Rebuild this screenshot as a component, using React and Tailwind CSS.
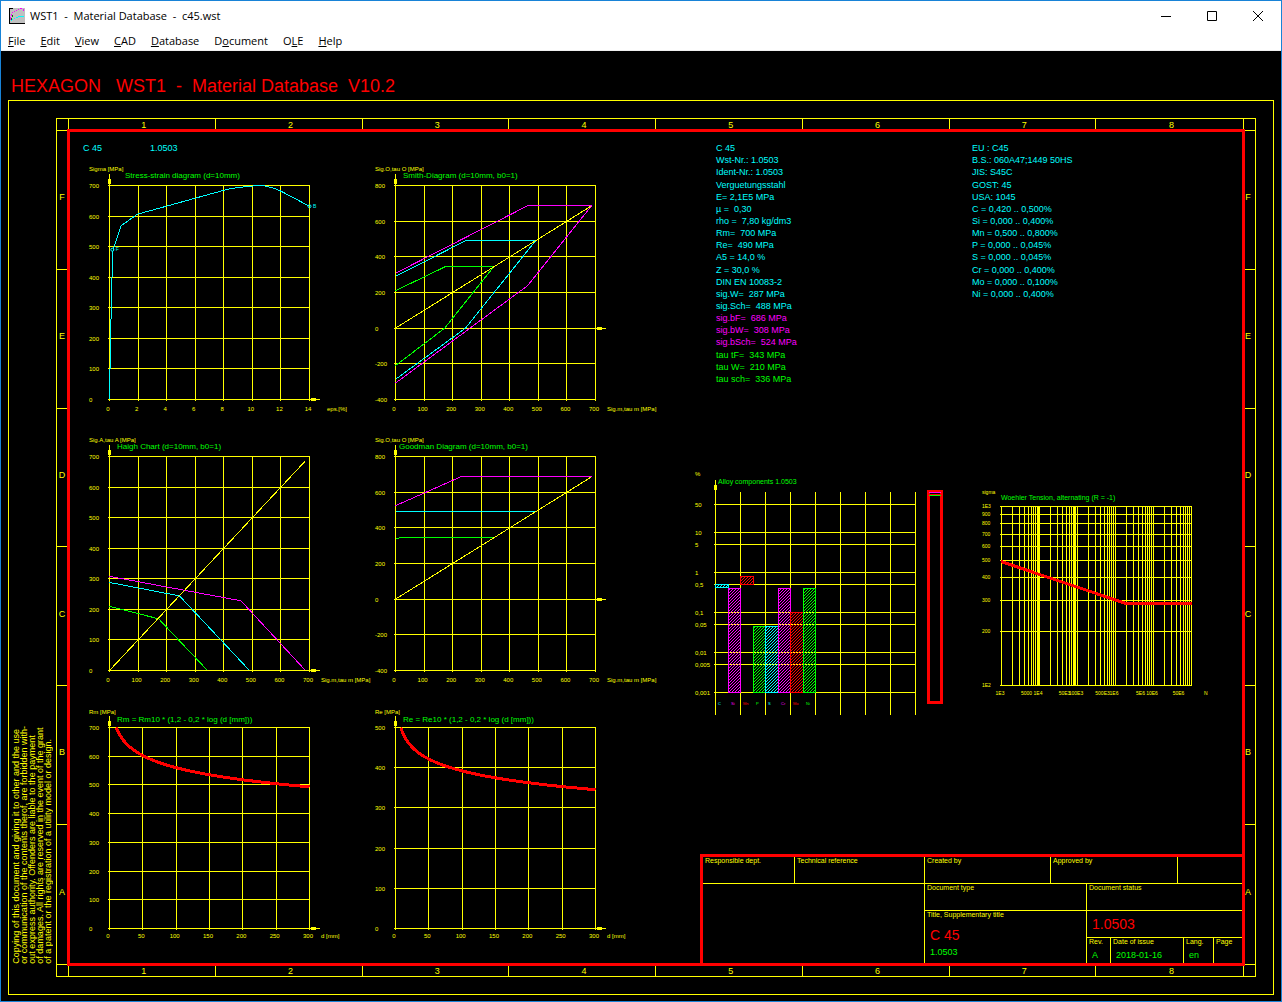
import React from 'react';
import { clsx } from 'clsx';

const YELLOW = '#ffff00';
const CYAN = '#00ffff';
const MAGENTA = '#ff00ff';
const GREEN = '#00ff00';
const RED = '#ff0000';

const MENU = [
    ['', 'F', 'ile'],
    ['', 'E', 'dit'],
    ['', 'V', 'iew'],
    ['', 'C', 'AD'],
    ['', 'D', 'atabase'],
    ['D', 'o', 'cument'],
    ['O', 'L', 'E'],
    ['', 'H', 'elp']
];

const COPYRIGHT = [
    'Copying of this document and giving it to other and the use',
    'or communication of the contents therof, are forbidden with-',
    'out express authority. Offenders are liable to the payment',
    'of damages. All rights are reserved in the event of the grant',
    'of a patent or the registration of a utility model or design.'
];

const PROPERTIES = [
    { color: 'text-[#00ffff]', lines: ['C 45', 'Wst-Nr.: 1.0503', 'Ident-Nr.: 1.0503'] },
    {
        color: 'text-[#00ffff]',
        spaced: true,
        lines: ['Verguetungsstahl', 'E= 2,1E5 MPa', 'µ =  0,30', 'rho =  7,80 kg/dm3', 'Rm=  700 MPa', 'Re=  490 MPa', 'A5 = 14,0 %']
    },
    { color: 'text-[#00ffff]', spaced: true, lines: ['Z = 30,0 %', 'DIN EN 10083-2', 'sig.W=  287 MPa', 'sig.Sch=  488 MPa'] },
    { color: 'text-[#ff00ff]', lines: ['sig.bF=  686 MPa', 'sig.bW=  308 MPa', 'sig.bSch=  524 MPa'] },
    { color: 'text-[#00ff00]', spaced: true, lines: ['tau tF=  343 MPa', 'tau W=  210 MPa', 'tau sch=  336 MPa'] }
];

const STANDARDS = [
    { color: 'text-[#00ffff]', lines: ['EU : C45', 'B.S.: 060A47;1449 50HS', 'JIS: S45C'] },
    {
        color: 'text-[#00ffff]',
        spaced: true,
        lines: ['GOST: 45', 'USA: 1045', 'C = 0,420 .. 0,500%', 'Si = 0,000 .. 0,400%', 'Mn = 0,500 .. 0,800%', 'P = 0,000 .. 0,045%', 'S = 0,000 .. 0,045%']
    },
    { color: 'text-[#00ffff]', spaced: true, lines: ['Cr = 0,000 .. 0,400%', 'Mo = 0,000 .. 0,100%', 'Ni = 0,000 .. 0,400%'] }
];

const range = (from, to, step) => {
    const out = [];
    for (let v = from; v <= to; v += step) out.push(v);
    return out;
};

// Strength over diameter: R = R10 * (1,2 - 0,2 * log d)
const sizeCurve = (r10, from) =>
    [from, ...range(10, 300, 5)].map(d => [d, r10 * (1.2 - 0.2 * Math.log10(d))]);

const TALL = { height: 214, titleY: 14, yLabelY: 7, xLabelY: 12 };
const SHORT = { height: 201, titleY: 16, yLabelY: 8, xLabelY: 10 };

const CHARTS = [
    {
        ...TALL,
        title: 'Stress-strain diagram (d=10mm)',
        titleX: 16,
        yLabel: 'Sigma [MPa]',
        xLabel: 'eps.[%]',
        xLabelX: 18,
        x: [0, 14, 2],
        y: [0, 700, 100],
        series: [
            {
                color: CYAN,
                points: [
                    [0, 0], [0.03, 85], [0.1, 250], [0.18, 410], [0.25, 490], [0.8, 568], [1.95, 606],
                    [7.9, 683], [8.5, 690], [9.3, 695], [10.2, 699], [10.8, 699], [11.6, 690], [12.1, 679], [14, 632]
                ]
            }
        ],
        marks: [[0.2, 490, 'F'], [14, 632, 'B']]
    },
    {
        ...TALL,
        title: 'Smith-Diagram (d=10mm, b0=1)',
        titleX: 8,
        yLabel: 'Sig.O,tau O [MPa]',
        xLabel: 'Sig.m,tau m [MPa]',
        xLabelX: 12,
        x: [0, 700, 100],
        y: [-400, 800, 200],
        series: [
            { color: MAGENTA, points: [[0, 308], [462, 686], [686, 686], [462, 238], [0, -308]] },
            { color: CYAN, points: [[0, 290], [245, 490], [490, 490], [245, 0], [0, -287]] },
            { color: GREEN, points: [[0, 210], [172, 343], [343, 343], [172, 0], [0, -210]] },
            { color: YELLOW, points: [[0, 0], [686, 686]] }
        ]
    },
    {
        ...TALL,
        title: 'Haigh Chart (d=10mm, b0=1)',
        titleX: 8,
        yLabel: 'Sig.A,tau A [MPa]',
        xLabel: 'Sig.m,tau m [MPa]',
        xLabelX: 12,
        x: [0, 700, 100],
        y: [0, 700, 100],
        series: [
            { color: MAGENTA, points: [[0, 308], [460, 228], [686, 0]] },
            { color: CYAN, points: [[0, 288], [245, 244], [490, 0]] },
            { color: GREEN, points: [[0, 210], [172, 169], [343, 0]] },
            { color: YELLOW, points: [[0, 0], [686, 686]] }
        ]
    },
    {
        ...TALL,
        title: 'Goodman Diagram (d=10mm, b0=1)',
        titleX: 4,
        yLabel: 'Sig.O,tau O [MPa]',
        xLabel: 'Sig.m,tau m [MPa]',
        xLabelX: 12,
        x: [0, 700, 100],
        y: [-400, 800, 200],
        series: [
            { color: MAGENTA, points: [[0, 524], [228, 686], [686, 686]] },
            { color: CYAN, points: [[0, 490], [490, 490]] },
            { color: GREEN, points: [[0, 336], [12, 343], [343, 343]] },
            { color: YELLOW, points: [[0, 0], [686, 686]] }
        ]
    },
    {
        ...SHORT,
        title: 'Rm = Rm10 * (1,2 - 0,2 * log (d [mm]))',
        titleX: 8,
        yLabel: 'Rm [MPa]',
        xLabel: 'd [mm]',
        xLabelX: 12,
        x: [0, 300, 50],
        y: [0, 700, 100],
        series: [{ color: RED, width: 3, points: sizeCurve(700, 10) }]
    },
    {
        ...SHORT,
        title: 'Re = Re10 * (1,2 - 0,2 * log (d [mm]))',
        titleX: 8,
        yLabel: 'Re [MPa]',
        xLabel: 'd [mm]',
        xLabelX: 12,
        x: [0, 300, 50],
        y: [0, 500, 100],
        series: [{ color: RED, width: 3, points: sizeCurve(490, 8) }]
    }
];

const ALLOYS = [
    ['C', 0.42, 0.5, CYAN],
    ['Si', 0.001, 0.4, MAGENTA],
    ['Mn', 0.5, 0.8, RED],
    ['P', 0.001, 0.045, GREEN],
    ['S', 0.001, 0.045, CYAN],
    ['Cr', 0.001, 0.4, MAGENTA],
    ['Mo', 0.001, 0.1, RED],
    ['Ni', 0.001, 0.4, GREEN]
];

const snap = v => Math.round(v) + 0.5;

const Line = ({ x1, y1, x2, y2, color = YELLOW }) => (
    <line x1={x1} y1={y1} x2={x2} y2={y2} stroke={color} shapeRendering="crispEdges" />
);

const Chart = ({ title, titleX, titleY, yLabel, yLabelY, xLabel, xLabelX, xLabelY, x, y, height, series, marks = [] }) => {
    const left = 20;
    const top = 21;
    const width = 200;
    const px = v => left + ((v - x[0]) / (x[1] - x[0])) * width;
    const py = v => top + height - ((v - y[0]) / (y[1] - y[0])) * height;
    const axisY = snap(py(0));
    const labelY = top + height + xLabelY;

    return (
        <svg width="286" height="250" className="block overflow-visible" role="img" aria-label={title}>
            {range(...x).map(v => (
                <g key={v}>
                    <Line x1={snap(px(v))} y1={top} x2={snap(px(v))} y2={top + height + 2} />
                    <text x={px(v) - 1} y={labelY} fontSize="6" textAnchor="middle" fill={YELLOW}>{v}</text>
                </g>
            ))}
            {range(...y).map(v => (
                <g key={v}>
                    <Line x1={left - 1} y1={snap(py(v))} x2={left + width + 1} y2={snap(py(v))} />
                    <text x="0" y={Math.round(py(v)) + 3} fontSize="6" fill={YELLOW}>{v}</text>
                </g>
            ))}
            {/* Axis arrows */}
            <Line x1={left + 0.5} y1={top - 11} x2={left + 0.5} y2={top} />
            <rect x={left - 1} y={top - 6} width="3" height="5" fill={YELLOW} />
            <Line x1={left + width} y1={axisY} x2={left + width + 11} y2={axisY} />
            <rect x={left + width + 2} y={axisY - 1.5} width="5" height="3" fill={YELLOW} />
            <text x="0" y={yLabelY} fontSize="6" fill={YELLOW}>{yLabel}</text>
            <text x={left + width + xLabelX} y={labelY} fontSize="6" fill={YELLOW}>{xLabel}</text>
            <text x={left + titleX} y={titleY} fontSize="8" fill={GREEN}>{title}</text>
            {series.map((s, i) => (
                <polyline
                    key={i}
                    points={s.points.map(([a, b]) => `${px(a) + 0.5},${py(b) + 0.5}`).join(' ')}
                    fill="none"
                    stroke={s.color}
                    strokeWidth={s.width || 1}
                    shapeRendering="crispEdges"
                />
            ))}
            {marks.map(([a, b, name]) => (
                <g key={name}>
                    <circle cx={px(a) + 0.5} cy={py(b) + 0.5} r="1.5" fill="none" stroke={CYAN} />
                    <text x={px(a) + 4} y={py(b) + 2} fontSize="5" fill={CYAN}>{name}</text>
                </g>
            ))}
        </svg>
    );
};

const AlloyChart = () => {
    const py = v => Math.round(104 - 40 * Math.log10(v));
    const ticks = [50, 10, 5, 1, 0.5, 0.1, 0.05, 0.01, 0.005, 0.001];

    return (
        <svg width="250" height="248" className="block overflow-visible" role="img" aria-label="Alloy components">
            <defs>
                {[CYAN, MAGENTA, RED, GREEN].map(c => (
                    <pattern key={c} id={`hatch-${c.slice(1)}`} width="3" height="3" patternUnits="userSpaceOnUse">
                        <path d="M2 0h1v1h-1zM1 1h1v1h-1zM0 2h1v1h-1z" fill={c} shapeRendering="crispEdges" />
                    </pattern>
                ))}
            </defs>
            {range(0, 8, 1).map(i => (
                <Line key={i} x1={20.5 + i * 25} y1="24" x2={20.5 + i * 25} y2="247" />
            ))}
            {ticks.map(v => (
                <g key={v}>
                    <Line x1="19" y1={py(v) + 0.5} x2="221" y2={py(v) + 0.5} />
                    <text x="0" y={py(v) + 3} fontSize="6" fill={YELLOW}>{String(v).replace('.', ',')}</text>
                </g>
            ))}
            <Line x1="20.5" y1="12" x2="20.5" y2="24" />
            <rect x="19" y="17" width="3" height="5" fill={YELLOW} />
            <text x="0" y="8" fontSize="6" fill={YELLOW}>%</text>
            <text x="23" y="16" fontSize="7" fill={GREEN}>Alloy components 1.0503</text>
            {ALLOYS.map(([name, low, high, color], i) => {
                const x = Math.round(20 + i * 12.5);
                return (
                    <g key={name}>
                        <rect
                            x={x + 0.5}
                            y={py(high) + 0.5}
                            width={Math.round(32.5 + i * 12.5) - x}
                            height={py(low) - py(high)}
                            fill={`url(#hatch-${color.slice(1)})`}
                            stroke={color}
                            shapeRendering="crispEdges"
                        />
                        <text x={x + 3} y="237" fontSize="4" fill={color}>{name}</text>
                    </g>
                );
            })}
            {/* Composition bar */}
            <rect x="233.5" y="23.5" width="13" height="211" fill="none" stroke={RED} strokeWidth="3" />
            <Line x1="234" y1="24.5" x2="246" y2="24.5" color={MAGENTA} />
            <Line x1="235" y1="26.5" x2="245" y2="26.5" color={RED} />
            <Line x1="234" y1="27.5" x2="246" y2="27.5" color={GREEN} />
        </svg>
    );
};

const WoehlerChart = () => {
    const px = n => 19 + 38 * (Math.log10(n) - 3);
    const py = s => 20 + 179 * (3 - Math.log10(s));
    const cycles = [3, 4, 5, 6, 7].flatMap(e => range(1, 9, 1).map(m => m * 10 ** e));
    const labels = [
        [1e3, '1E3'], [5e3, '5000'], [1e4, '1E4'], [5e4, '50E3'], [1e5, '100E3'],
        [5e5, '500E3'], [1e6, '1E6'], [5e6, '5E6'], [1e7, '10E6'], [5e7, '50E6']
    ];

    return (
        <svg width="233" height="212" className="block overflow-visible" role="img" aria-label="Woehler">
            {[...cycles, 1e8].map(n => (
                <Line key={n} x1={snap(px(n))} y1="20" x2={snap(px(n))} y2="200" />
            ))}
            {/* Doubled decade lines */}
            <Line x1="56.5" y1="20" x2="56.5" y2="200" />
            <Line x1="92.5" y1="20" x2="92.5" y2="200" />
            {range(100, 1000, 100).map(s => (
                <g key={s}>
                    <Line x1="18" y1={snap(py(s))} x2="210" y2={snap(py(s))} />
                    <text x="0" y={Math.round(py(s)) + 2} fontSize="5" fill={YELLOW}>
                        {s === 1000 ? '1E3' : s === 100 ? '1E2' : s}
                    </text>
                </g>
            ))}
            {labels.map(([n, label]) => (
                <text key={n} x={px(n) - 1} y="209" fontSize="5" textAnchor="middle" fill={YELLOW}>{label}</text>
            ))}
            <text x="222" y="209" fontSize="5" fill={YELLOW}>N</text>
            <text x="0" y="8" fontSize="5" fill={YELLOW}>sigma</text>
            <text x="19" y="14" fontSize="7" fill={GREEN}>Woehler Tension, alternating (R = -1)</text>
            <polyline points="19,75.5 144,117.5 210,117.5" fill="none" stroke={RED} strokeWidth="3" shapeRendering="crispEdges" />
        </svg>
    );
};

const DataList = ({ groups }) => (
    <div className="whitespace-pre text-[9px] leading-[12px]">
        {groups.map((group, i) => (
            <ul key={i} className={clsx(group.color, group.spaced && 'mt-px')}>
                {group.lines.map(line => <li key={line}>{line}</li>)}
            </ul>
        ))}
    </div>
);

const ColumnZones = ({ bottom }) => (
    <div className="grid grid-cols-8 text-center text-[9px] leading-[12px]">
        {range(1, 8, 1).map(n => (
            <span key={n} className={clsx('border-[#ffff00] pl-1', n < 8 && 'border-r', bottom ? 'pt-px' : 'pb-px')}>{n}</span>
        ))}
    </div>
);

const RowZones = () => (
    <div className="grid grid-rows-6 text-center text-[9px]">
        {['F', 'E', 'D', 'C', 'B', 'A'].map(c => (
            <span key={c} className="flex items-center justify-center border-b border-[#ffff00] pr-[2px] pb-1 last:border-b-0">{c}</span>
        ))}
    </div>
);

const Cell = ({ label, className, children }) => (
    <div className={clsx('border-[#ffff00] pl-[2px] leading-[8px]', className)}>
        <div className="whitespace-nowrap">{label}</div>
        {children}
    </div>
);

const TitleBlock = () => (
    <div className="w-[542px] self-end border-t-3 border-l-3 border-[#ff0000] text-[7px]">
        <div className="grid h-[27px] grid-cols-[92fr_130fr_126fr_127fr_64fr]">
            <Cell label="Responsible dept." className="border-r border-b" />
            <Cell label="Technical reference" className="border-r border-b" />
            <Cell label="Created by" className="border-r border-b" />
            <Cell label="Approved by" className="border-r border-b" />
            <Cell className="border-b" />
        </div>
        <div className="grid h-[79px] grid-cols-[222fr_162fr_155fr]">
            <div className="border-r border-[#ffff00]" />
            <div className="grid grid-rows-[27px_1fr] border-r border-[#ffff00]">
                <Cell label="Document type" className="border-b" />
                <Cell label="Title, Supplementary title">
                    <div className="mt-2 pl-[3px] text-[14px] leading-[16px] text-[#ff0000]">C 45</div>
                    <div className="mt-[3px] pl-[3px] text-[9px] leading-[12px] text-[#00ff00]">1.0503</div>
                </Cell>
            </div>
            <div className="grid grid-rows-[27px_27px_1fr]">
                <Cell label="Document status" className="border-b" />
                <div className="flex items-center border-b border-[#ffff00] pl-[5px] text-[14px] text-[#ff0000]">1.0503</div>
                <div className="grid grid-cols-[24fr_73fr_30fr_28fr]">
                    {[['Rev.', 'A'], ['Date of issue', '2018-01-16'], ['Lang.', 'en'], ['Page', '']].map(([label, value]) => (
                        <Cell key={label} label={label} className="border-r last:border-r-0">
                            <div className="mt-[3px] pl-[3px] text-[9px] leading-[12px] text-[#00ff00]">{value}</div>
                        </Cell>
                    ))}
                </div>
            </div>
        </div>
    </div>
);

const TitleBar = () => (
    <div className="flex h-[30px] items-center pl-2">
        <svg width="16" height="16" viewBox="0 0 16 16" shapeRendering="crispEdges" aria-hidden="true">
            <rect width="16" height="16" fill="#c0c0c0" />
            <path d="M0.5 0V15.5H16M0 0.5H4" fill="none" stroke="#000" />
            <path d="M1 9h1v3h-1zM2 6h1v2h-1zM3 4h1v1h-1zM5 3h1v1h-1zM7 2h1v1h-1zM9 1h1v1h-1zM11 0h2v1h-2zM14 1h1v2h-1z" fill={MAGENTA} />
            <path d="M3 7h1v2h-1zM2 10h1v2h-1z" fill="#008000" />
            <path d="M2 12h1v1h-1zM3 11h1v1h-1zM5 10h1v1h-1zM7 9h2v1h-2zM9 8h6v1h-6z" fill={CYAN} />
        </svg>
        <span className="whitespace-pre pl-[5px] text-[11px]">WST1  -  Material Database  -  c45.wst</span>
        <div className="ml-auto flex h-full">
            {[['Minimize', 'M0 5.5h10'], ['Maximize', 'M0.5 0.5h9v9h-9z'], ['Close', 'M0 0l10 10M10 0l-10 10']].map(([label, d]) => (
                <button key={label} type="button" aria-label={label} className="flex w-[46px] items-center justify-center hover:bg-gray-200">
                    <svg width="10" height="10" fill="none" stroke="#000"><path d={d} /></svg>
                </button>
            ))}
        </div>
    </div>
);

const App = () => (
    <div className="flex min-h-screen flex-col border border-[#1883d7] bg-black font-['Liberation_Sans',Arial,sans-serif] text-[#ffff00]">
        <header className="border-b border-[#f0f0f0] bg-white font-['Open_Sans','Noto_Sans',sans-serif] text-black">
            <TitleBar />
            <nav className="flex h-[19px] gap-[15px] pl-[7px] text-[11px]">
                {MENU.map(([before, key, after]) => (
                    <button key={before + key + after} type="button" className="leading-[19px]">
                        {before}<span className="underline">{key}</span>{after}
                    </button>
                ))}
            </nav>
        </header>

        <main className="flex flex-1 flex-col px-[7px] pb-[6px]">
            <h1 className="flex h-[49px] items-center whitespace-pre pt-[22px] pl-[3px] text-[18px] text-[#ff0000]">
                HEXAGON   WST1  -  Material Database  V10.2
            </h1>

            <div className="flex flex-1 border border-[#ffff00] py-[17px] pr-[17px]">
                {/* Copyright note, read from the bottom up */}
                <div className="flex w-[47px] items-end pb-[13px] pl-[3px]">
                    <p className="rotate-180 whitespace-nowrap text-[9px] leading-[8px] [writing-mode:vertical-rl]">
                        {COPYRIGHT.map(line => <span key={line} className="block">{line}</span>)}
                    </p>
                </div>

                <div className="grid flex-1 grid-cols-[12px_1fr_12px] grid-rows-[12px_1fr_12px] border border-[#ffff00]">
                    <div className="border-r border-b border-[#ffff00]" />
                    <ColumnZones />
                    <div className="border-b border-l border-[#ffff00]" />

                    <RowZones />
                    <div className="z-10 -m-[2px] flex border-3 border-[#ff0000]">
                        <section className="flex flex-col gap-[10px] pt-[10px]">
                            <div className="flex gap-12 pl-[13px] text-[9px] leading-[12px] text-[#00ffff]">
                                <span>C 45</span>
                                <span>1.0503</span>
                            </div>
                            <div className="grid grid-cols-2 gap-y-[21px] pl-[19px]">
                                {CHARTS.map(chart => <Chart key={chart.title} {...chart} />)}
                            </div>
                        </section>
                        <section className="flex flex-1 flex-col pt-[10px]">
                            <div className="grid grid-cols-[256px_1fr] pl-[55px]">
                                <DataList groups={PROPERTIES} />
                                <DataList groups={STANDARDS} />
                            </div>
                            <div className="mt-[83px] mb-auto flex items-center gap-[37px] pl-[34px]">
                                <AlloyChart />
                                <WoehlerChart />
                            </div>
                            <TitleBlock />
                        </section>
                    </div>
                    <RowZones />

                    <div className="border-t border-r border-[#ffff00]" />
                    <ColumnZones bottom />
                    <div className="border-t border-l border-[#ffff00]" />
                </div>
            </div>
        </main>
    </div>
);

export default App;
